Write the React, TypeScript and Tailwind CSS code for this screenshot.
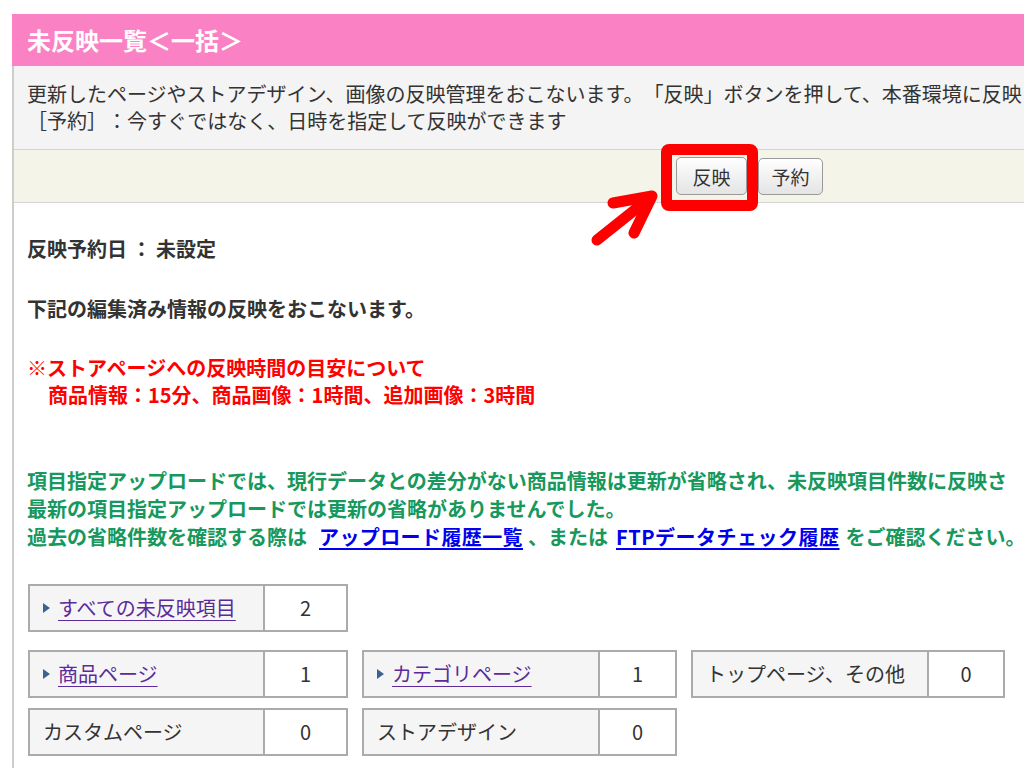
import React from "react";

const Tri = () => (
  <svg width="7" height="10" viewBox="0 0 7 10" className="mr-[8px] shrink-0">
    <path d="M0 0 L7 5 L0 10 Z" fill="#3b6391" />
  </svg>
);

type CellProps = { label: string; value: string; link?: boolean; w: string; lw: string };

const Cell = ({ label, value, link, w, lw }: CellProps) => (
  <div className={`flex h-[48px] border-2 border-[#ababab] ${w}`}>
    <div className={`flex items-center bg-[#f5f5f5] pl-[13px] border-r-2 border-[#ababab] ${lw}`}>
      {link ? (
        <>
          <Tri />
          <span className="text-[#5c2b9b] underline underline-offset-[4px] decoration-1">{label}</span>
        </>
      ) : (
        <span className="text-[#333]">{label}</span>
      )}
    </div>
    <div className="flex-1 flex items-center justify-center bg-white text-[#333]">{value}</div>
  </div>
);

export default function App() {
  return (
    <div className="relative w-[1024px] h-[768px] overflow-hidden bg-white font-['Noto_Sans_CJK_JP','Noto_Sans',sans-serif] [text-spacing-trim:space-all]">
      <div className="pt-[14px] pl-[12px]">
        <div className="h-[52px] bg-[#fa82c4] flex items-center pl-[15px] text-white font-bold text-[24px] leading-none whitespace-nowrap">
          未反映一覧＜一括＞
        </div>
        <div className="border-l-2 border-[#cdcdcd]">
          <div className="bg-[#f4f4f4] border-b border-[#d3d3d3] pl-[13px] pt-[14px] pb-[15px] text-[20px] leading-[27px] text-[#333] whitespace-nowrap">
            <div>更新したページやストアデザイン、画像の反映管理をおこないます。「反映」ボタンを押して、本番環境に反映</div>
            <div>［予約］：今すぐではなく、日時を指定して反映ができます</div>
          </div>
          <div className="h-[53px] bg-[#f4f4e8] border-b border-[#d3d3d3] flex items-center pl-[662px] gap-[11px]">
            <button className="w-[71px] h-[38px] rounded-[5px] border border-[#9a9a9a] bg-gradient-to-b from-white to-[#e4e4e4] text-[19px] text-[#333] leading-none">
              反映
            </button>
            <button className="w-[65px] h-[37px] rounded-[5px] border border-[#9a9a9a] bg-gradient-to-b from-white to-[#e4e4e4] text-[19px] text-[#333] leading-none">
              予約
            </button>
          </div>
          <div className="pl-[13px] pt-[32px] pb-[40px] text-[20px] whitespace-nowrap">
            <div className="font-bold text-[#333] leading-[27px]">反映予約日 ： 未設定</div>
            <div className="font-bold text-[#333] leading-[27px] mt-[33px]">下記の編集済み情報の反映をおこないます。</div>
            <div className="font-bold text-[#ff0000] leading-[27px] mt-[32px]">
              <div>※ストアページへの反映時間の目安について</div>
              <div className="pl-[21px]">商品情報：15分、商品画像：1時間、追加画像：3時間</div>
            </div>
            <div className="font-bold text-[#17985c] leading-[28px] mt-[59px]">
              <div>項目指定アップロードでは、現行データとの差分がない商品情報は更新が省略され、未反映項目件数に反映さ</div>
              <div>最新の項目指定アップロードでは更新の省略がありませんでした。</div>
              <div>
                過去の省略件数を確認する際は
                <span className="ml-[12px] text-[#0000ee] underline underline-offset-[3px] tracking-[0.4px]">アップロード履歴一覧</span>
                <span className="ml-[5px]">、または</span>
                <span className="ml-[8px] text-[#0000ee] underline underline-offset-[3px] tracking-[0.5px]">FTPデータチェック履歴</span>
                <span className="ml-[6px]">をご確認ください。</span>
              </div>
            </div>
            <div className="mt-[33px] pl-[1px] flex flex-col">
              <Cell label="すべての未反映項目" value="2" link w="w-[320px]" lw="w-[235px]" />
              <div className="flex gap-[14px] mt-[18px]">
                <Cell label="商品ページ" value="1" link w="w-[320px]" lw="w-[235px]" />
                <Cell label="カテゴリページ" value="1" link w="w-[315px]" lw="w-[236px]" />
                <Cell label="トップページ、その他" value="0" w="w-[314px]" lw="w-[236px]" />
              </div>
              <div className="flex gap-[14px] mt-[10px]">
                <Cell label="カスタムページ" value="0" w="w-[320px]" lw="w-[235px]" />
                <Cell label="ストアデザイン" value="0" w="w-[315px]" lw="w-[236px]" />
              </div>
            </div>
          </div>
        </div>
      </div>
      <div className="absolute left-[661px] top-[144px] w-[97px] h-[67px] border-[11px] border-[#ff0000] rounded-[8px]" />
      <svg className="absolute left-0 top-0 pointer-events-none" width="1024" height="768" viewBox="0 0 1024 768">
        <g stroke="#ff0000" strokeWidth="11" strokeLinecap="round" strokeLinejoin="round" fill="none">
          <path d="M597 240 L651 197" />
          <path d="M613 203 L652 196 L634 233" />
        </g>
      </svg>
    </div>
  );
}
